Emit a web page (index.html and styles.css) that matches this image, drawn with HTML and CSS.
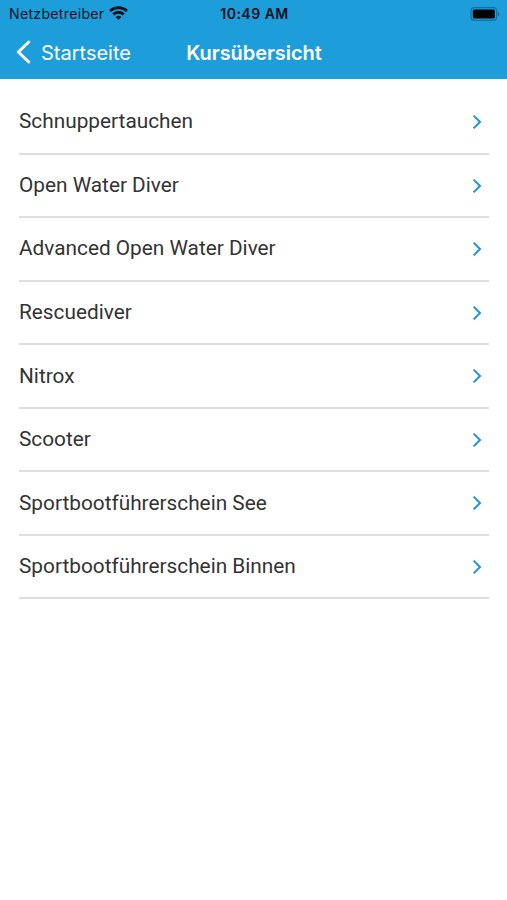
FILE: index.html
```html
<!DOCTYPE html>
<html lang="de">
<head>
<title>Kursübersicht</title>
<meta charset="utf-8">
<meta name="viewport" content="width=device-width, initial-scale=1">
<link rel="stylesheet" href="styles.css">
</head>
<body>
<div class="header">
	<div class="status">
		<div class="carrier">
			<span>Netzbetreiber</span>
			<svg class="wifi" width="19" height="14" viewBox="0 0 18 13" fill="none" stroke="#04121b" stroke-width="2.7">
				<path d="M1 4.6a11.6 11.6 0 0 1 16 0"/>
				<path d="M4 7.8a7.2 7.2 0 0 1 10 0"/>
				<path d="M9 13L6.3 10.3a3.9 3.9 0 0 1 5.4 0z" fill="#04121b" stroke="none"/>
			</svg>
		</div>
		<div class="time">10:49 AM</div>
		<div class="power">
			<svg width="30" height="14" viewBox="0 0 30 14">
				<rect x="1" y="0.7" width="25.6" height="12.6" rx="3.4" fill="none" stroke="#126f9f" stroke-width="1.2"/>
				<rect x="2.8" y="2.5" width="22" height="9" rx="1.6" fill="#000"/>
				<path d="M27.8 4.8v4.4a2.3 2.3 0 0 0 0-4.4z" fill="#126f9f"/>
			</svg>
		</div>
	</div>
	<div class="nav">
		<a class="back">
			<svg width="15" height="24" viewBox="0 0 15 24" fill="none" stroke="#fff" stroke-width="3" stroke-linecap="round" stroke-linejoin="round">
				<path d="M12.8 2L2.3 12l10.5 10"/>
			</svg>
			<span>Startseite</span>
		</a>
		<div class="title">Kursübersicht</div>
	</div>
</div>
<ul class="courses">
	<li><span>Schnuppertauchen</span><svg class="arrow" viewBox="0 0 10 16"><path d="M1.6 1.6L8 8l-6.4 6.4"/></svg></li>
	<li><span>Open Water Diver</span><svg class="arrow" viewBox="0 0 10 16"><path d="M1.6 1.6L8 8l-6.4 6.4"/></svg></li>
	<li><span>Advanced Open Water Diver</span><svg class="arrow" viewBox="0 0 10 16"><path d="M1.6 1.6L8 8l-6.4 6.4"/></svg></li>
	<li><span>Rescuediver</span><svg class="arrow" viewBox="0 0 10 16"><path d="M1.6 1.6L8 8l-6.4 6.4"/></svg></li>
	<li><span>Nitrox</span><svg class="arrow" viewBox="0 0 10 16"><path d="M1.6 1.6L8 8l-6.4 6.4"/></svg></li>
	<li><span>Scooter</span><svg class="arrow" viewBox="0 0 10 16"><path d="M1.6 1.6L8 8l-6.4 6.4"/></svg></li>
	<li><span>Sportbootführerschein See</span><svg class="arrow" viewBox="0 0 10 16"><path d="M1.6 1.6L8 8l-6.4 6.4"/></svg></li>
	<li><span>Sportbootführerschein Binnen</span><svg class="arrow" viewBox="0 0 10 16"><path d="M1.6 1.6L8 8l-6.4 6.4"/></svg></li>
</ul>
</body>
</html>
```

FILE: styles.css
```css
* {
	box-sizing: border-box;
}
body {
	margin: 0;
	background-color: #fff;
	font-family: Roboto, sans-serif;
}
.header {
	height: 79px;
	background-color: #1e9ddb;
	font-family: Inter, sans-serif;
}
/* phone status bar */
.status {
	display: grid;
	grid-template-columns: 1fr auto 1fr;
	align-items: center;
	height: 27px;
	padding: 0 7px 0 9px;
	color: #04121b;
	font-size: 14px;
}
.carrier {
	display: flex;
	align-items: center;
	gap: 5px;
	letter-spacing: 0.35px;
}
.wifi {
	margin-top: -2px;
}
.time {
	font-weight: 600;
	letter-spacing: 0.5px;
}
.power {
	display: flex;
	justify-content: flex-end;
}
.nav {
	display: grid;
	grid-template-columns: 1fr auto 1fr;
	align-items: center;
	height: 51px;
	padding: 0 15px 0 16px;
	color: #fff;
	font-size: 20px;
}
.back {
	display: flex;
	align-items: center;
	gap: 10px;
}
.back svg {
	margin-top: -1px;
}
.title {
	font-weight: 600;
	letter-spacing: -0.05px;
}
.courses {
	list-style: none;
	margin: 0;
	padding: 12px 18px 0 19px;
}
.courses li {
	display: flex;
	align-items: center;
	justify-content: space-between;
	height: 63.53px;
	padding-right: 7px;
	border-bottom: 2px solid #dedede;
	color: #333;
	font-size: 20.8px;
}
.courses span {
	margin-top: -0.6px;
}
.arrow {
	width: 10px;
	height: 16px;
	margin-top: 1px;
	fill: none;
	stroke: #1e96d2;
	stroke-width: 2;
}
```
